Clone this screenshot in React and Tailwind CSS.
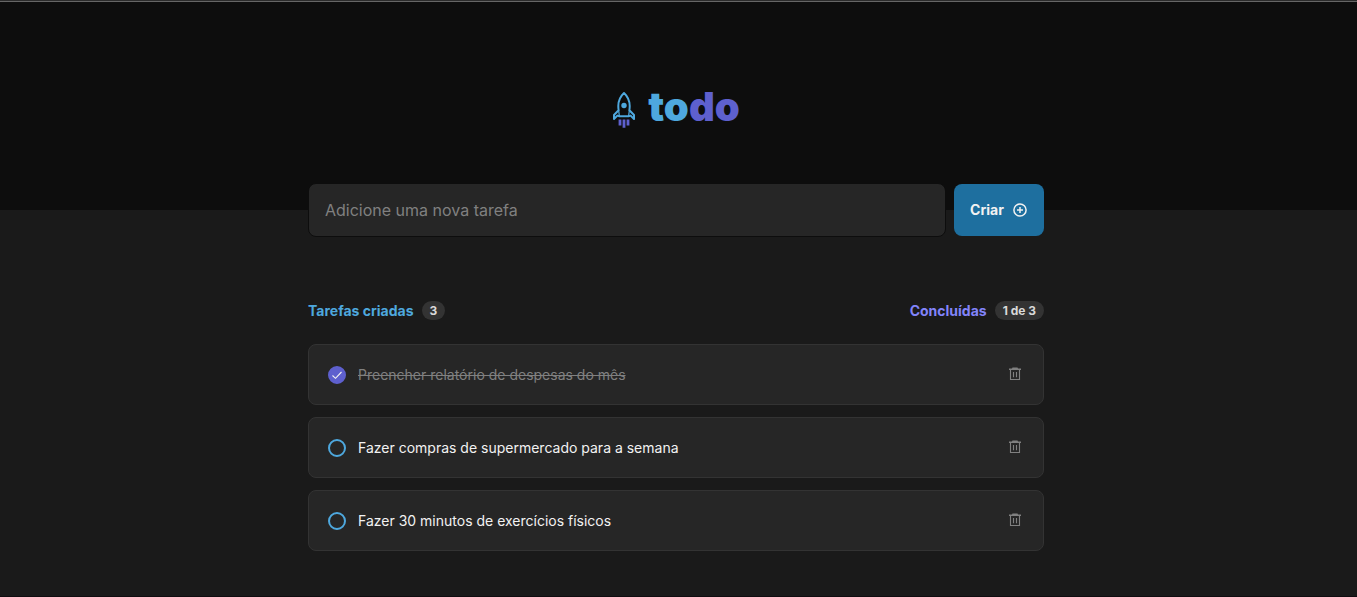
import { useState } from 'react';

const initialTasks = [
  { id: 1, title: 'Preencher relatório de despesas do mês', done: true },
  { id: 2, title: 'Fazer compras de supermercado para a semana', done: false },
  { id: 3, title: 'Fazer 30 minutos de exercícios físicos', done: false },
];

function Rocket() {
  return (
    <svg width="24" height="38" viewBox="0 0 24 38" fill="none" aria-hidden="true">
      <path
        d="M12 2C8.2 5.5 6.3 10 6.3 15C6.3 16.8 6.4 18 6.6 19.2L2 24V28L5.4 24.6L7.4 25.2H16.6L18.6 24.6L22 28V24L17.4 19.2C17.6 18 17.7 16.8 17.7 15C17.7 10 15.8 5.5 12 2Z"
        stroke="#4EA8DE"
        strokeWidth="2"
        strokeLinejoin="round"
      />
      <path d="M6.6 19.2L7.4 25.2M17.4 19.2L16.6 25.2" stroke="#4EA8DE" strokeWidth="1.2" />
      <circle cx="12" cy="14.5" r="2.7" fill="#4EA8DE" />
      <path d="M8 28.5V34.5M12 28.5V36.8M16 28.5V34.5" stroke="#5E60CE" strokeWidth="2.8" />
    </svg>
  );
}

function PlusCircle() {
  return (
    <svg width="16" height="16" viewBox="0 0 16 16" fill="none" stroke="#F2F2F2" strokeWidth="1.5" aria-hidden="true">
      <circle cx="8" cy="8" r="6.1" />
      <path d="M8 5V11M5 8H11" />
    </svg>
  );
}

function Trash() {
  return (
    <svg width="12" height="14" viewBox="0 0 12 14" fill="none" aria-hidden="true">
      <path d="M3.5 0.5H8.5L9 1.5H12V3H0V1.5H3Z" fill="currentColor" />
      <path d="M1.5 3V12.5H10.5V3M4.5 5V10.3M7.5 5V10.3" stroke="currentColor" strokeWidth="1.1" />
    </svg>
  );
}

function Counter({ label, value, color }) {
  return (
    <div className="flex items-center gap-2">
      <span className={`text-sm leading-[17px] font-bold ${color}`}>{label}</span>
      <span className="rounded-full bg-[#333333] px-2 py-0.5 text-xs leading-[15px] font-bold text-[#d9d9d9]">
        {value}
      </span>
    </div>
  );
}

function Task({ task, onToggle, onDelete }) {
  return (
    <li className="flex items-center justify-between rounded-lg border border-[#333333] bg-[#262626] py-5 pr-[22px] pl-[19px]">
      <label className="flex min-w-0 cursor-pointer items-center gap-3">
        <span className="grid shrink-0 place-items-center">
          <input
            type="checkbox"
            checked={task.done}
            onChange={onToggle}
            className="col-start-1 row-start-1 size-[18px] cursor-pointer appearance-none rounded-full border-2 border-[#4ea8de] checked:border-[#5e60ce] checked:bg-[#5e60ce]"
          />
          {task.done && (
            <svg
              className="pointer-events-none col-start-1 row-start-1"
              width="12"
              height="12"
              viewBox="0 0 12 12"
              fill="none"
              aria-hidden="true"
            >
              <path d="M1.5 6.5L4.5 9.3L10.5 3" stroke="#F2F2F2" strokeWidth="1.1" />
            </svg>
          )}
        </span>
        <span className={task.done ? 'text-sm leading-[19px] text-[#808080] line-through' : 'text-sm leading-[19px] text-[#f2f2f2]'}>
          {task.title}
        </span>
      </label>
      <button
        type="button"
        aria-label={`Excluir ${task.title}`}
        onClick={onDelete}
        className="cursor-pointer pb-0.5 text-[#808080]"
      >
        <Trash />
      </button>
    </li>
  );
}

export default function App() {
  const [tasks, setTasks] = useState(initialTasks);
  const [title, setTitle] = useState('');

  function createTask(event) {
    event.preventDefault();
    if (!title.trim()) return;
    setTasks([...tasks, { id: Date.now(), title: title.trim(), done: false }]);
    setTitle('');
  }

  return (
    <div className="flex min-h-screen flex-col border-t border-b border-t-[#2b2b2b] border-b-[#100c10] bg-[#1a1a1a] font-['Inter',sans-serif]">
      <header className="flex h-[209px] justify-center border-t border-[#666666] bg-[#0d0d0d] pt-[88px] pr-[5px]">
        <h1 className="flex h-10 items-center gap-3 text-[40px] leading-10 font-black text-[#4ea8de]">
          <Rocket />
          <span className="pb-1.5">
            to<span className="text-[#5e60ce]">do</span>
          </span>
        </h1>
      </header>

      <main className="flex flex-col items-center pr-[5px] pb-10">
        <div className="w-full max-w-[736px]">
          <form onSubmit={createTask} className="-mt-[27px] flex items-center gap-2">
            <input
              type="text"
              aria-label="Nova tarefa"
              placeholder="Adicione uma nova tarefa"
              value={title}
              onChange={(event) => setTitle(event.target.value)}
              className="h-[54px] min-w-0 flex-1 rounded-lg border border-[#0d0d0d] bg-[#262626] px-4 text-base text-[#f2f2f2] outline-none placeholder:text-[#808080]"
            />
            <button
              type="submit"
              className="flex h-[52px] w-[90px] cursor-pointer items-center justify-center gap-2 rounded-lg bg-[#1e6f9f] text-sm font-bold text-[#f2f2f2]"
            >
              Criar
              <PlusCircle />
            </button>
          </form>

          <section className="mt-16">
            <div className="flex items-center justify-between">
              <Counter label="Tarefas criadas" value={tasks.length} color="text-[#4ea8de]" />
              <Counter
                label="Concluídas"
                value={`${tasks.filter((task) => task.done).length} de ${tasks.length}`}
                color="text-[#8284fa]"
              />
            </div>
            <ul className="mt-6 flex flex-col gap-3">
              {tasks.map((task) => (
                <Task
                  key={task.id}
                  task={task}
                  onToggle={() => setTasks(tasks.map((item) => (item.id === task.id ? { ...item, done: !item.done } : item)))}
                  onDelete={() => setTasks(tasks.filter((item) => item.id !== task.id))}
                />
              ))}
            </ul>
          </section>
        </div>
      </main>
    </div>
  );
}
